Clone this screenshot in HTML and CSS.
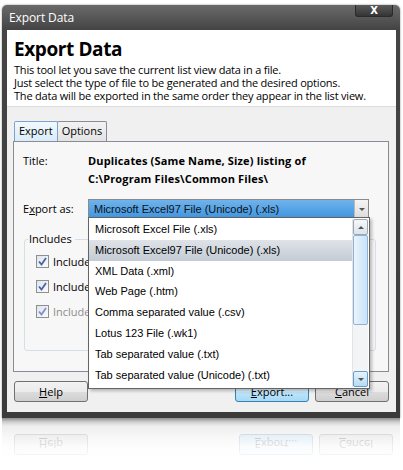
FILE: index.html
```html
<!DOCTYPE html>
<html lang="en">
<head>
    <meta charset="UTF-8" />
    <title>Export Data</title>
    <link rel="stylesheet" href="styles.css">
</head>
<body>
    <div class="window">
        <div class="titlebar">
            <span class="caption">Export Data</span>
            <span class="close">X</span>
        </div>
        <div class="client">
            <div class="header">
                <h1>Export Data</h1>
                <p>This tool let you save the current list view data in a file.<br>
                Just select the type of file to be generated and the desired options.<br>
                The data will be exported in the same order they appear in the list view.</p>
            </div>
            <div class="content">
                <div class="tabs">
                    <span class="tab active">Export</span>
                    <span class="tab">Options</span>
                </div>
                <div class="panel">
                    <div class="row">
                        <span class="label">Title:</span>
                        <span class="value">Duplicates (Same Name, Size) listing of<br>C:\Program Files\Common Files\</span>
                    </div>
                    <div class="row export-row">
                        <span class="label">E<u>x</u>port as:</span>
                        <div class="combo">
                            <span class="combo-text">Microsoft Excel97 File (Unicode) (.xls)</span>
                            <span class="combo-btn"><i class="arrow-down"></i></span>
                            <div class="dropdown">
                                <ul class="options">
                                    <li>Microsoft Excel File (.xls)</li>
                                    <li class="hot">Microsoft Excel97 File (Unicode) (.xls)</li>
                                    <li>XML Data (.xml)</li>
                                    <li>Web Page (.htm)</li>
                                    <li>Comma separated value (.csv)</li>
                                    <li>Lotus 123 File (.wk1)</li>
                                    <li>Tab separated value (.txt)</li>
                                    <li>Tab separated value (Unicode) (.txt)</li>
                                </ul>
                                <div class="scrollbar">
                                    <span class="sb-btn"><i class="arrow-up"></i></span>
                                    <span class="sb-thumb"></span>
                                    <span class="sb-track"></span>
                                    <span class="sb-btn hover"><i class="arrow-down"></i></span>
                                </div>
                            </div>
                        </div>
                    </div>
                    <fieldset class="group">
                        <legend>Includes</legend>
                        <label class="check"><span class="box"><svg width="9" height="9" viewBox="0 0 9 9"><path d="M1 4.5 L3.5 7.5 L8 1" fill="none" stroke="#4565a8" stroke-width="1.8"/></svg></span><span class="text">Include column headers</span></label>
                        <label class="check"><span class="box"><svg width="9" height="9" viewBox="0 0 9 9"><path d="M1 4.5 L3.5 7.5 L8 1" fill="none" stroke="#4565a8" stroke-width="1.8"/></svg></span><span class="text">Include group headers</span></label>
                        <label class="check disabled"><span class="box"><svg width="9" height="9" viewBox="0 0 9 9"><path d="M1 4.5 L3.5 7.5 L8 1" fill="none" stroke="#7d92c4" stroke-width="1.8"/></svg></span><span class="text">Include hidden columns</span></label>
                    </fieldset>
                </div>
                <div class="buttons">
                    <button class="btn"><u>H</u>elp</button>
                    <span class="spacer"></span>
                    <button class="btn default"><u>E</u>xport...</button>
                    <button class="btn"><u>C</u>ancel</button>
                </div>
            </div>
        </div>
    </div>

    <!-- faded mirror under the window -->
    <div class="reflection">
        <div class="mirror">
            <div class="buttons">
                <button class="btn"><u>H</u>elp</button>
                <span class="spacer"></span>
                <button class="btn default"><u>E</u>xport...</button>
                <button class="btn"><u>C</u>ancel</button>
            </div>
        </div>
    </div>
</body>
</html>
```

FILE: styles.css
```css
body {
    margin: 0;
    width: 403px;
    height: 470px;
    overflow: hidden;
    background-color: #fff;
    font-family: "Open Sans", "Noto Sans", sans-serif;
    font-size: 11px;
    color: #000;
}

.window {
    margin: 5px 0 0 2px;
    width: 398px;
    padding: 0 4px 6px 5px;
    box-sizing: border-box;
    background: linear-gradient(#6a6a6a, #454545 24px, #3b3b3b);
    border-radius: 5px 5px 0 0;
    box-shadow: 0 0 2px rgba(0, 0, 0, 0.5);
}

.titlebar {
    height: 25px;
    display: flex;
    align-items: center;
    padding-left: 2px;
}

.caption {
    color: #fff;
    font-size: 12px;
    letter-spacing: -0.1px;
}

.close {
    margin-left: auto;
    margin-right: 3px;
    align-self: flex-start;
    width: 38px;
    height: 12px;
    box-sizing: border-box;
    border: 1px solid #2a2a2a;
    border-top: none;
    border-radius: 0 0 3px 3px;
    background: linear-gradient(#5b5b5b, #343434);
    color: #fff;
    font-family: "DejaVu Sans", sans-serif;
    font-weight: bold;
    font-size: 10px;
    line-height: 11px;
    text-align: center;
}

.client {
    height: 382px;
    background-color: #f0f0f0;
    display: flex;
    flex-direction: column;
}

.header {
    height: 77px;
    box-sizing: border-box;
    background-color: #fff;
    border-bottom: 1px solid #dcdcdc;
    padding: 6px 7px 0;
}

.header h1 {
    margin: 0;
    font-size: 19px;
    line-height: 26px;
    font-weight: bold;
    letter-spacing: -0.4px;
}

.header p {
    margin: 1px 0 0;
    line-height: 13px;
    letter-spacing: -0.2px;
}

.content {
    padding: 13px 7px 0 6px;
}

.tabs {
    display: flex;
    padding-left: 1px;
}

.tab {
    height: 19px;
    padding: 0 4px;
    line-height: 18px;
    border: 1px solid #898c95;
    border-bottom: none;
    border-radius: 2px 2px 0 0;
    background: linear-gradient(#f2f2f2, #e3e3e3);
    margin-top: 1px;
}

.tab + .tab {
    margin-left: -1px;
}

.tab.active {
    background: linear-gradient(#f2f9fd, #d8ecf9);
    border-color: #7da2ce;
    position: relative;
    z-index: 1;
    margin-bottom: -1px;
}

.panel {
    height: 231px;
    box-sizing: border-box;
    border: 1px solid #898c95;
    background-color: #f7f7f7;
    padding: 10px 10px 0 9px;
}

.row {
    display: flex;
    line-height: 18px;
}

.label {
    width: 65px;
    flex-shrink: 0;
}

.value {
    font-weight: bold;
    letter-spacing: 0.15px;
}

.export-row {
    margin-top: 11px;
    align-items: center;
}

.combo {
    position: relative;
    width: 281px;
    height: 20px;
    box-sizing: border-box;
    border: 1px solid #8a8a8a;
    background: linear-gradient(#6fb3ec, #3f95e0);
    display: flex;
    align-items: center;
    z-index: 2;
}

.combo-text {
    flex: 1;
    padding-left: 5px;
    font-family: "Liberation Sans", Arial, sans-serif;
    color: #111;
}

.combo-btn {
    width: 13px;
    height: 18px;
    border-left: 1px solid #b9b9b9;
    background: linear-gradient(#f5f5f5, #dcdcdc);
    display: flex;
    align-items: center;
    justify-content: center;
}

.arrow-down, .arrow-up {
    display: block;
    width: 0;
    height: 0;
    border-left: 3px solid transparent;
    border-right: 3px solid transparent;
}

.arrow-down {
    border-top: 3px solid #555;
}

.arrow-up {
    border-bottom: 3px solid #555;
}

.dropdown {
    position: absolute;
    top: 17px;
    left: -1px;
    width: 282px;
    height: 172px;
    box-sizing: border-box;
    border: 1px solid #646464;
    background-color: #fff;
    box-shadow: 2px 2px 3px rgba(0, 0, 0, 0.25);
    display: flex;
    padding: 1px 1px 1px 0;
}

.options {
    flex: 1;
    list-style: none;
    margin: 0;
    padding: 0;
    font-family: "Liberation Sans", Arial, sans-serif;
    font-size: 11px;
}

.options li {
    height: 20.8px;
    line-height: 21px;
    padding-left: 6px;
}

.options li.hot {
    background: linear-gradient(#dfe3e8, #c3cbd4);
}

.scrollbar {
    width: 15px;
    display: flex;
    flex-direction: column;
    background-color: #f3f4f6;
    border-left: 1px solid #e4e4e4;
}

.sb-btn {
    height: 16px;
    box-sizing: border-box;
    border: 1px solid #9aa6b3;
    border-radius: 2px;
    background: linear-gradient(#f6f7f9, #dde3ea);
    display: flex;
    align-items: center;
    justify-content: center;
}

.sb-btn.hover {
    border-color: #6b9cc9;
    background: linear-gradient(#e5f3fc, #b6dbf5);
}

.sb-thumb {
    height: 90px;
    box-sizing: border-box;
    border: 1px solid #8fb2d6;
    border-radius: 2px;
    background: linear-gradient(90deg, #eaf5fd, #c7e3f8);
}

.sb-track {
    flex: 1;
}

.group {
    margin: 14px 2px 0 1px;
    height: 118px;
    box-sizing: border-box;
    border: 1px solid #d5dfe5;
    border-radius: 3px;
    padding: 4px 0 0 11px;
}

.group legend {
    padding: 0 3px 0 1px;
    margin-left: -8px;
    line-height: 12px;
}

.check {
    display: flex;
    align-items: center;
    height: 25px;
    line-height: 25px;
}

/* the open list covers the rest of each caption */
.check .text {
    width: 35px;
    overflow: hidden;
    white-space: nowrap;
}

.check.disabled {
    color: #8d8d8d;
}

.box {
    width: 13px;
    height: 13px;
    box-sizing: border-box;
    border: 1px solid #8e8f8f;
    background: linear-gradient(135deg, #dfe4ed, #fafbfc);
    margin-right: 4px;
    display: flex;
    align-items: center;
    justify-content: center;
}

.buttons {
    display: flex;
    gap: 6px;
    margin-top: 9px;
    padding-left: 1px;
}

.spacer {
    flex: 1;
}

.btn {
    width: 74px;
    height: 21px;
    padding: 0;
    font-family: "Open Sans", "Noto Sans", sans-serif;
    font-size: 11px;
    color: #000;
    border: 1px solid #707070;
    border-radius: 3px;
    background: linear-gradient(#f2f2f2 0, #ebebeb 50%, #dddddd 51%, #cfcfcf);
}

.btn.default {
    border-color: #3c7fb1;
    background: linear-gradient(#eaf6fd 0, #d9f0fc 50%, #bee6fd 51%, #a7d9f5);
}

.reflection {
    margin-left: 2px;
    width: 398px;
    height: 52px;
    position: relative;
    background: linear-gradient(#8c8c8c 0, #cfcfcf 4px, #eeeeee 8px, #fbfbfb 30px, #fff 52px);
    overflow: hidden;
}

.mirror {
    margin: 16px 7px 0 11px;
    transform: scaleY(-1);
    opacity: 0.25;
}

.mirror .buttons {
    margin: 0;
}

.reflection::after {
    content: "";
    position: absolute;
    inset: 0;
    background: linear-gradient(rgba(255, 255, 255, 0) 10px, rgba(255, 255, 255, 0.6) 30px, #fff 50px);
}
```
